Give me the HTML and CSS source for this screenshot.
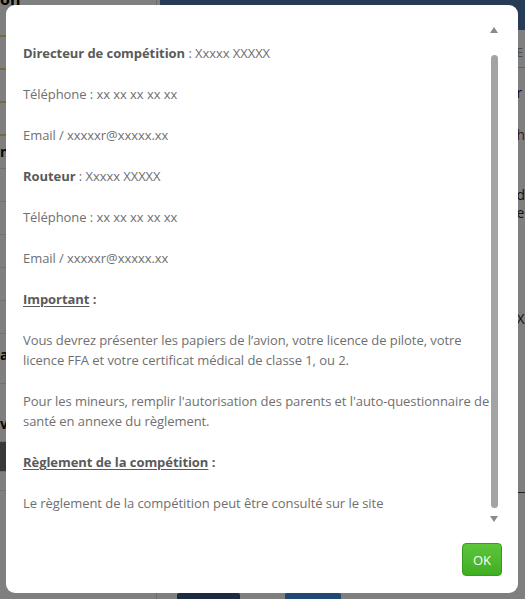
FILE: index.html
```html
<!DOCTYPE html>
<html lang="fr">
<head>
<meta charset="utf-8">
<title>Informations</title>
<link rel="stylesheet" href="styles.css">
</head>
<body>
<div class="bg">
  <aside class="side">
    <div class="side-title">on</div>
    <ul class="side-list">
      <li class="gold first"></li>
      <li class="gold"></li>
      <li class="gold"></li>
      <li class="gold"></li>
      <li class="center-txt"><span>n</span></li>
      <li></li>
      <li></li>
      <li></li>
      <li></li>
      <li></li>
      <li class="tall"><span>ai</span></li>
      <li class="mid"><span>vi</span></li>
      <li class="dark"></li>
      <li class="short"></li>
    </ul>
  </aside>
  <div class="main">
    <div class="topbar"></div>
    <div class="main-body">
      <div class="center">
        <div class="actions">
          <button class="btn btn-valider">Valider</button>
          <button class="btn btn-annuler">Annuler</button>
        </div>
      </div>
      <div class="right">
        <div class="r-head">E</div>
        <div class="r-line r1">r</div>
        <div class="r-line r2">h</div>
        <div class="r-line r3">d<br>e</div>
        <div class="r-line r4">X</div>
      </div>
    </div>
  </div>
</div>

<div class="overlay"></div>

<div class="modal">
  <div class="modal-body">
    <div class="content">
      <p><b>Directeur de compétition</b> : Xxxxx XXXXX</p>
      <p>Téléphone : xx xx xx xx xx</p>
      <p>Email / xxxxxr@xxxxx.xx</p>
      <p><b>Routeur</b> : Xxxxx XXXXX</p>
      <p>Téléphone : xx xx xx xx xx</p>
      <p>Email / xxxxxr@xxxxx.xx</p>
      <p><b><u>Important</u> :</b></p>
      <p>Vous devrez présenter les papiers de l’avion, votre licence de pilote, votre licence FFA et votre certificat médical de classe 1, ou 2.</p>
      <p>Pour les mineurs, remplir l'autorisation des parents et l'auto-questionnaire de santé en annexe du règlement.</p>
      <p><b><u>Règlement de la compétition</u> :</b></p>
      <p>Le règlement de la compétition peut être consulté sur le site</p>
      <p>www.xxxxx.xx</p>
    </div>
    <div class="scrollbar">
      <span class="arrow up"></span>
      <span class="thumb"></span>
      <span class="arrow down"></span>
    </div>
  </div>
  <div class="modal-footer">
    <button class="btn-ok">OK</button>
  </div>
</div>
</body>
</html>
```

FILE: styles.css
```css
* { box-sizing: border-box; }

html, body {
  margin: 0;
  padding: 0;
  height: 100%;
  overflow: hidden;
  background: #ffffff;
  font-family: "Open Sans", "Noto Sans", "Liberation Sans", sans-serif;
}

/* ---------- background page (dimmed) ---------- */
.bg {
  display: flex;
  height: 640px;
}

.side {
  width: 160px;
  border-right: 1px solid #d8d8d8;
}

.side-title {
  margin-top: -12px;
  height: 20px;
  font-weight: 700;
  font-size: 16px;
  color: #000;
}

.side-list {
  list-style: none;
  margin: 0;
  padding: 0;
}

.side-list li {
  height: 33px;
  border-bottom: 1px solid #e0e0e0;
  font-size: 14px;
  color: #111;
  font-weight: 700;
  display: flex;
  align-items: flex-end;
}

.side-list li.first { height: 29px; }
.side-list li.gold { border-bottom: 2px solid #f0d27a; }
.side-list li.center-txt { align-items: center; }
.side-list li.tall { height: 50px; align-items: center; padding-bottom: 8px; }
.side-list li.mid { height: 58px; align-items: flex-end; padding-bottom: 10px; }
.side-list li.dark { height: 30px; background: #707070; }
.side-list li.short { height: 19px; }
.side-list li span { line-height: 1; }

.main {
  flex: 1;
  display: flex;
  flex-direction: column;
}

.topbar {
  height: 30px;
  background: #4a76ad;
  margin-left: 3px;
}

.main-body {
  display: flex;
  flex: 1;
}

.center {
  width: 358px;
  padding-top: 563px;
}

.actions {
  display: flex;
  gap: 45px;
  padding-left: 20px;
}

.btn {
  border: 0;
  height: 30px;
  padding: 0 12px;
  font-family: inherit;
  font-size: 14px;
  color: #fff;
  border-radius: 2px;
}

.btn-valider { width: 63px; background: #365784; }
.btn-annuler { width: 56px; background: #3f91e6; }

.right {
  flex: 1;
  font-size: 14px;
  color: #222;
  padding-left: 1px;
}

.r-head {
  height: 38px;
  padding-top: 14px;
  font-size: 12px;
  color: #999;
  border-bottom: 1px solid #ccc;
}

.r-line { line-height: 18px; }
.r1 { margin-top: 16px; }
.r2 { margin-top: 24px; color: #6a3030; }
.r3 { margin-top: 42px; }
.r4 { margin-top: 88px; padding-bottom: 164px; border-bottom: 1px solid #444; }

/* ---------- overlay + modal ---------- */
.overlay {
  position: fixed;
  inset: 0;
  background: rgba(0, 0, 0, 0.5);
}

.modal {
  position: fixed;
  left: 6px;
  top: 5px;
  width: 512px;
  height: 588px;
  background: #fff;
  border-radius: 9px;
  display: flex;
  flex-direction: column;
  padding: 17px 20px 0 17px;
}

.modal-body {
  height: 505px;
  display: flex;
  overflow: hidden;
}

.content {
  flex: 1;
  padding-top: 21px;
  font-size: 13px;
  line-height: 20px;
  letter-spacing: -0.06px;
  color: #6f6f6f;
}

.content p {
  margin: 0 0 21px;
}

.content b {
  color: #5a5a5a;
  font-weight: 700;
}

.content u {
  text-decoration: underline;
  text-underline-offset: 2px;
}

.scrollbar {
  width: 8px;
  display: flex;
  flex-direction: column;
  align-items: center;
  padding: 5px 0;
}

.arrow {
  width: 0;
  height: 0;
  border-left: 4px solid transparent;
  border-right: 4px solid transparent;
}

.arrow.up { border-bottom: 6px solid #8a8a8a; }
.arrow.down { border-top: 6px solid #8a8a8a; margin-top: 8px; }

.thumb {
  width: 7px;
  height: 453px;
  margin-top: 22px;
  background: #a3a3a3;
  border-radius: 4px;
}

.modal-footer {
  display: flex;
  justify-content: flex-end;
  padding-top: 16px;
}

.btn-ok {
  width: 40px;
  height: 33px;
  margin-right: -4px;
  border: 1px solid #3a9a1c;
  border-radius: 4px;
  background: linear-gradient(#5cc63c, #3fae22);
  color: #fff;
  font-family: inherit;
  font-size: 13px;
  padding: 0;
}
```
